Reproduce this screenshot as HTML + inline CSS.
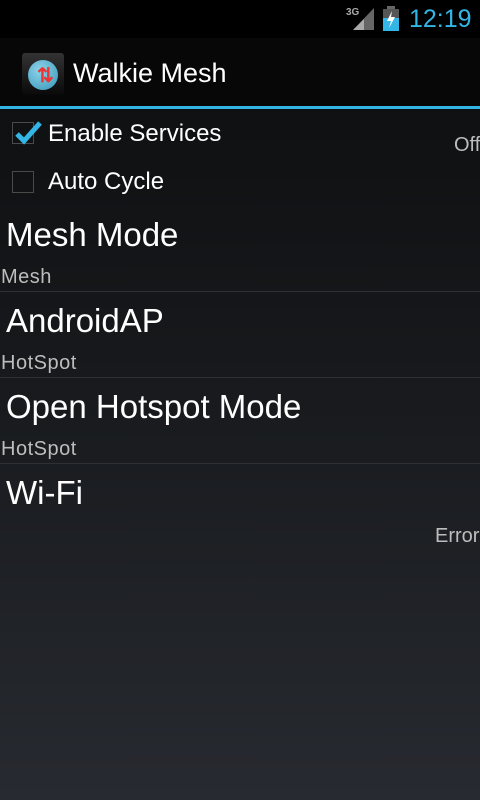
<!DOCTYPE html><html><head><style>
body{margin:0;width:480px;height:800px;overflow:hidden;font-family:"Liberation Sans",sans-serif;background:linear-gradient(#0c0d0e 0%,#15171a 40%,#272a30 100%);position:relative;color:#fff}
.a{position:absolute;white-space:nowrap}
.big{font-size:33px;left:6px}
.sm{font-size:20px;color:#bdbdbd;left:1px;letter-spacing:0.5px}
.div{position:absolute;left:0;width:480px;height:1px;background:#2e3034}
.cb{position:absolute;left:12px;width:22px;height:22px;border:1px solid #4a4a4a;box-sizing:border-box}
</style></head><body>
<div class="a" style="left:0;top:0;width:480px;height:38px;background:#000"></div>
<div class="a" style="left:346px;top:7px;font-size:10px;color:#aaa;font-weight:bold">3G</div>
<svg class="a" style="left:350px;top:8px" width="25" height="22"><polygon points="3,22 24,22 24,0" fill="#666"/><polygon points="3,22 14,22 14,11" fill="#aaa"/></svg>
<svg class="a" style="left:383px;top:6px" width="16" height="25"><rect x="4" y="0" width="8" height="3" fill="#666"/><rect x="0" y="3" width="16" height="22" fill="#555"/><rect x="0" y="12" width="16" height="13" fill="#33b5e5"/><polygon points="9,5 4,15 8,15 6,22 12,11 8,11" fill="#fff"/></svg>
<div class="a" style="left:409px;top:5px;font-size:25px;color:#33b5e5">12:19</div>
<div class="a" style="left:0;top:38px;width:480px;height:69px;background:#070707"></div>
<div class="a" style="left:22px;top:53px;width:42px;height:42px;background:linear-gradient(#333,#0a0a0a);border-radius:3px"></div>
<div class="a" style="left:28px;top:60px;width:30px;height:30px;border-radius:50%;background:radial-gradient(circle at 40% 35%,#8fd4ea,#3595b8)"></div>
<div class="a" style="left:37px;top:63px;font-size:20px;color:#e33;font-weight:bold">⇅</div>
<div class="a" style="left:73px;top:58px;font-size:27px">Walkie Mesh</div>
<div class="a" style="left:0;top:106px;width:480px;height:3px;background:#33b5e5"></div>
<div class="cb" style="top:122px"></div>
<svg class="a" style="left:14px;top:118px" width="28" height="28"><path d="M3 16 L10 23 L26 5" stroke="#33b5e5" stroke-width="5" fill="none"/></svg>
<div class="a" style="left:48px;top:120px;font-size:24px">Enable Services</div>
<div class="a" style="left:454px;top:134px;font-size:20px;color:#bdbdbd">Off</div>
<div class="cb" style="top:171px"></div>
<div class="a" style="left:48px;top:168px;font-size:24px">Auto Cycle</div>
<div class="a big" style="top:216px">Mesh Mode</div>
<div class="a sm" style="top:266px">Mesh</div>
<div class="div" style="top:291px"></div>
<div class="a big" style="top:302px">AndroidAP</div>
<div class="a sm" style="top:352px">HotSpot</div>
<div class="div" style="top:377px"></div>
<div class="a big" style="top:388px">Open Hotspot Mode</div>
<div class="a sm" style="top:438px">HotSpot</div>
<div class="div" style="top:463px"></div>
<div class="a big" style="top:474px">Wi-Fi</div>
<div class="a" style="left:435px;top:525px;font-size:20px;color:#bdbdbd">Error</div>
</body></html>
